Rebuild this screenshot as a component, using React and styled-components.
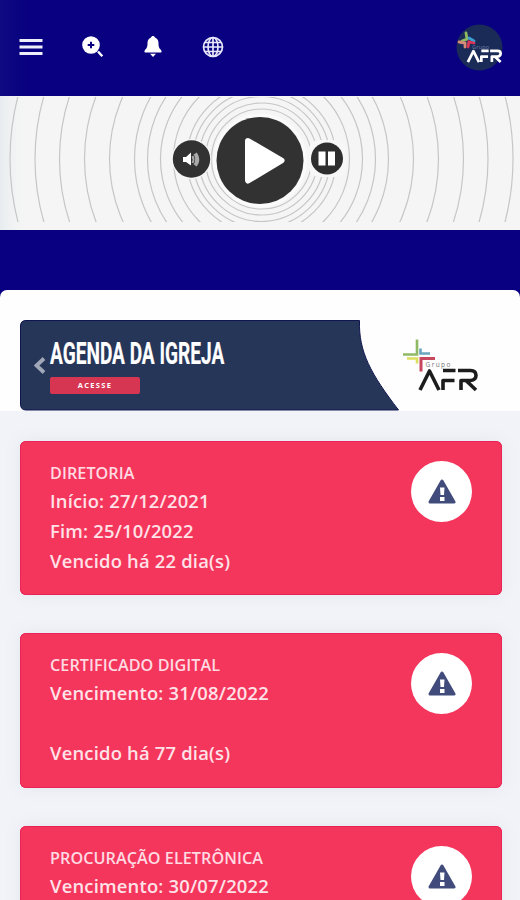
import React from "react";
import styled, { createGlobalStyle } from "styled-components";

const Global = createGlobalStyle`
  * { box-sizing: border-box; }
  html, body { margin: 0; height: 900px; overflow: hidden; background: #f1f3f8; }
`;

const Screen = styled.div`
  width: 520px;
  height: 900px;
  overflow: hidden;
  display: flex;
  flex-direction: column;
  background: #f1f3f8;
  font-family: "Open Sans", "Noto Sans", sans-serif;
`;

const TopBar = styled.header`
  height: 96px;
  flex: none;
  display: flex;
  align-items: center;
  justify-content: space-between;
  padding: 0 17px 2px 19px;
  background: linear-gradient(90deg, #0f0a82 0, #080080 30px);
`;

const Actions = styled.nav`
  display: flex;
  align-items: center;
`;

const IconButton = styled.button`
  display: flex;
  padding: 0;
  border: 0;
  background: none;
  margin-right: ${(p) => p.$gap}px;
`;

const Avatar = styled.svg`
  display: block;
`;

const Player = styled.section`
  height: 134px;
  flex: none;
  background: #f5f5f5;
`;

const Band = styled.div`
  height: 60px;
  flex: none;
  background: #080080;
`;

const CornerBack = styled.div`
  flex: none;
  background: #080080;
`;

const Sheet = styled.section`
  height: 121px;
  padding: 30px 0 0 20px;
  border-radius: 7px 7px 0 0;
  background: #fefefe;
`;

const Banner = styled.div`
  height: 91px;
  width: 500px;
  display: flex;
  position: relative;
`;

const BannerArt = styled.svg`
  position: absolute;
  inset: 0;
`;

const BannerBody = styled.div`
  position: relative;
  display: flex;
  align-items: center;
  padding-left: 14px;
`;

const BannerText = styled.div`
  align-self: flex-start;
  padding: 15px 0 0 4px;
`;

const Headline = styled.h1`
  margin: 0;
  height: 42px;
  width: 174px;
  font: 700 31.5px/37px Roboto, sans-serif;
  white-space: nowrap;
  color: #fff;
  -webkit-text-stroke: 0.2px #fff;
  transform: scaleX(0.606);
  transform-origin: 0 0;
`;

const Access = styled.div`
  width: 90px;
  height: 17px;
  border-radius: 2px;
  background: #d63652;
  color: #fff;
  font: 700 7.5px/17px "Open Sans", sans-serif;
  letter-spacing: 1.3px;
  text-align: center;
`;

const Cards = styled.main`
  display: flex;
  flex-direction: column;
  gap: 38px;
  padding: 29.6px 18px 0 20px;
`;

const Card = styled.article`
  height: 154.5px;
  flex: none;
  display: flex;
  justify-content: space-between;
  padding: 20px 30px;
  border-radius: 6px;
  background: #f5365c;
  box-shadow: inset 0 0 0 1px #e92355, 0 0 16px rgba(136, 152, 170, 0.12);
`;

const Title = styled.h2`
  margin: 0 0 1px;
  height: 24px;
  font-size: 16.2px;
  line-height: 24px;
  font-weight: 600;
  letter-spacing: 0.05px;
  color: #ffdae2;
  white-space: nowrap;
`;

const Line = styled.p`
  margin: 0;
  height: 30px;
  font-size: 18.4px;
  line-height: 30px;
  font-weight: 600;
  letter-spacing: 0.2px;
  color: #ffe2e8;
  white-space: nowrap;
`;

const Badge = styled.div`
  width: 61px;
  height: 61px;
  border-radius: 50%;
  background: #fff;
  display: flex;
  align-items: center;
  justify-content: center;
`;

const radii = [251.5, 226.5, 202, 177, 152, 127, 114, 101, 88, 74.5, 68.5, 62.5, 56, 50];

const notices = [
  { title: "DIRETORIA", lines: ["Início: 27/12/2021", "Fim: 25/10/2022", "Vencido há 22 dia(s)"] },
  { title: "CERTIFICADO DIGITAL", lines: ["Vencimento: 31/08/2022", "", "Vencido há 77 dia(s)"] },
  { title: "PROCURAÇÃO ELETRÔNICA", lines: ["Vencimento: 30/07/2022", "", ""] },
];

function Letters({ color, width }) {
  return (
    <g fill="none" stroke={color} strokeWidth={width} strokeLinejoin="round">
      <path d="M1.5 22 L11 3 L20.5 22" />
      <path d="M24.5 22 V12.5 H36 M24.5 2.5 H37" />
      <path d="M39.500 2.500 H52 Q57.500 2.500 57.500 7.200 T52 12.500 H42.500 V22 M48 13 L57.500 22" />
    </g>
  );
}

function Cross() {
  return (
    <g fill="none" strokeWidth="2.6">
      <path d="M14 0 V15 H0" stroke="#8fba63" />
      <path d="M4 19 H14 V24" stroke="#dce05c" />
      <path d="M17.500 9 V14 H27" stroke="#6aa5bd" />
      <path d="M18 32 V19 H32" stroke="#c7475f" strokeWidth="3" />
    </g>
  );
}

export default function App() {
  return (
    <Screen>
      <Global />
      <TopBar>
        <Actions>
          <IconButton $gap={39} aria-label="Menu">
            <svg width="24" height="24" viewBox="0 0 24 24" stroke="#eeedfa" strokeWidth="2.8">
              <path d="M0.500 5.500 H23.500 M0.500 12 H23.500 M0.500 18.500 H23.500" />
            </svg>
          </IconButton>
          <IconButton $gap={40} aria-label="Zoom">
            <svg width="22" height="22" viewBox="0 0 22 22">
              <circle cx="9" cy="9" r="8.800" fill="#fff" />
              <path d="M9 5.700 V12.300 M5.700 9 H12.300" stroke="#080080" strokeWidth="2" />
              <path d="M16 15.500 L20.300 20.300" stroke="#fff" strokeWidth="2.400" />
            </svg>
          </IconButton>
          <IconButton $gap={40} aria-label="Notificações">
            <svg width="18" height="22" viewBox="0 0 18 22" fill="#fff">
              <path d="M9 0 C10 0 10.800 .7 11 1.500 C13.500 2.500 14.500 4.500 14.500 7 C14.500 11 15.200 12.300 17 14 Q18.500 16.500 16.500 16.500 H1.500 Q-.5 16.500 1 14 C2.800 12.300 3.500 11 3.500 7 C3.500 4.500 4.500 2.500 7 1.500 C7.200 .7 8 0 9 0 Z M6 17.700 H12 L9 21 Z" />
            </svg>
          </IconButton>
          <IconButton $gap={0} aria-label="Idioma">
            <svg width="22" height="22" viewBox="0 0 22 22" fill="none" stroke="#e8e7fa" strokeWidth="1.700">
              <circle cx="11" cy="11" r="9.500" />
              <ellipse cx="11" cy="11" rx="5" ry="9.500" />
              <path d="M11 1.500 V20.500 M2 11 H20 M3 6.500 H19 M3 15.500 H19" />
            </svg>
          </IconButton>
        </Actions>
        <Avatar width="47" height="47" viewBox="0 0 47 47">
          <circle cx="23.500" cy="23.500" r="23" fill="#1b2b58" />
          <g fill="none" strokeWidth="2.800" strokeLinecap="round">
            <path d="M10 9 L11 15 L6 17" stroke="#8fba63" />
            <path d="M13 14 L18 17" stroke="#3d9fd0" />
            <path d="M3 18 L9 19 L9 23" stroke="#d68a78" />
            <path d="M12 23 L13 18 L18 19" stroke="#dc3557" />
          </g>
          <text x="16" y="24.500" fontSize="5.500" fontFamily="Open Sans" fill="#6f80a4" letterSpacing=".2">Grupo</text>
          <g transform="translate(11 25.500) scale(.585 .57)"><Letters color="#fff" width="4.600" /></g>
        </Avatar>
      </TopBar>

      <Player>
        <svg width="520" height="134" viewBox="0 96 520 134" display="block">
          <defs>
            <clipPath id="rings"><rect x="0" y="97" width="520" height="125" /></clipPath>
            <linearGradient id="fade"><stop stopColor="#e8ecef" /><stop offset="1" stopColor="#f5f5f5" stopOpacity="0" /></linearGradient>
          </defs>
          <rect y="96" width="30" height="134" fill="url(#fade)" />
          <g clipPath="url(#rings)" fill="none" stroke="#c6c6c6" strokeWidth="1.200">
            {radii.map((r) => <circle key={r} cx="261.500" cy="159" r={r} />)}
          </g>
          <circle cx="260" cy="160.500" r="47" fill="#fafafa" />
          <circle cx="191.500" cy="159" r="20" fill="#f7f7f7" />
          <rect x="309" y="140" width="37" height="37" rx="9" fill="#f7f7f7" />
          <circle cx="260" cy="160.500" r="43.500" fill="#323232" />
          <circle cx="191.500" cy="159" r="18.700" fill="#323232" />
          <circle cx="327" cy="158.500" r="16" fill="#2e2e2e" />
          <path d="M248 141 L281.500 160.500 L248 180.500 Z" fill="#fff" stroke="#fff" strokeWidth="6" strokeLinejoin="round" />
          <path d="M183 157 H186 L191 152.500 V165.500 L186 162 H183 Z" fill="#fff" />
          <path d="M192.500 156 Q194.500 159.500 192.500 163 M194.500 154 Q198 159.500 194.500 165 M196 153 Q200.500 159.500 196 166" fill="none" stroke="#aaa" strokeWidth="2" />
          <path d="M318.500 151.500 h7 v14 h-7 Z M328 151.500 h7 v14 h-7 Z" fill="#fff" />
        </svg>
      </Player>
      <Band />

      <CornerBack>
        <Sheet>
          <Banner>
            <BannerArt width="500" height="91" viewBox="20 320 500 91">
              <path d="M26 320.500 H359.500 C358.500 352 371 374 398.500 410 H26 Q20.500 410 20.500 404 V326 Q20.500 320.500 26 320.500 Z" fill="#263659" stroke="#10154f" />
              <g transform="translate(403 339.500)"><Cross /></g>
              <text x="425.500" y="366.500" fontSize="6.500" fontFamily="Open Sans" fill="#777" letterSpacing="1.400">Grupo</text>
              <g transform="translate(418.500 368)"><Letters color="#1c1c1c" width="3.600" /></g>
            </BannerArt>
            <BannerBody>
              <svg width="12" height="18" viewBox="0 0 12 18" fill="none" stroke="#a0a8b8" strokeWidth="3.800">
                <path d="M10 1.500 L2.500 8.500 L10 15.500" />
              </svg>
              <BannerText>
                <Headline>AGENDA DA IGREJA</Headline>
                <Access>ACESSE</Access>
              </BannerText>
            </BannerBody>
          </Banner>
        </Sheet>
      </CornerBack>

      <Cards>
        {notices.map((n) => (
          <Card key={n.title}>
            <div>
              <Title>{n.title}</Title>
              {n.lines.map((l, i) => <Line key={i}>{l}</Line>)}
            </div>
            <Badge>
              <svg width="28" height="25" viewBox="0 0 28 25">
                <path d="M14 2 L26 23 H2 Z" fill="#414c7c" stroke="#414c7c" strokeWidth="3" strokeLinejoin="round" />
                <path d="M12 8.500 H16.500 L16 16 H12.500 Z M12 18 h4.500 v4 h-4.500 Z" fill="#fff" />
              </svg>
            </Badge>
          </Card>
        ))}
      </Cards>
    </Screen>
  );
}
